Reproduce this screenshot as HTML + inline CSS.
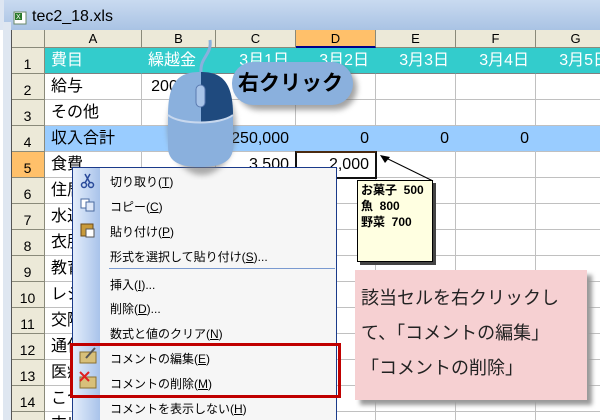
<!DOCTYPE html>
<html><head><meta charset="utf-8"><style>
*{margin:0;padding:0;box-sizing:border-box}
html,body{width:600px;height:420px;overflow:hidden}
body{position:relative;background:#fff;font-family:"Liberation Sans","Noto Sans CJK JP",sans-serif}
.abs{position:absolute}
.title{left:0;top:0;width:600px;height:30px;background:linear-gradient(#c9daf0,#a9c3e4);border-left:4px solid #dde6f2}
.frame{left:3px;top:22px;width:8px;height:398px;background:#dfe7f1}
.cell{position:absolute;border-right:1px solid #c0c0c0;border-bottom:1px solid #c0c0c0;font-size:16px;line-height:26px;white-space:nowrap;overflow:hidden}
.ch{position:absolute;top:30px;height:18px;background:#ece9d8;border-right:1px solid #8a8a7a;border-bottom:1px solid #8a8a7a;font-size:13px;text-align:center;line-height:18px}
.rh{position:absolute;left:11px;width:34px;background:#ece9d8;border-right:1px solid #8a8a7a;border-bottom:1px solid #8a8a7a;font-size:14px;text-align:center;padding-top:8px}
.mi{position:absolute;left:110px;font-size:12px;color:#000}
</style></head><body>
<div class="abs title"></div>
<div class="abs frame"></div>
<svg class="abs" style="left:13px;top:11px" width="14" height="14"><rect x="1" y="1" width="12" height="12" fill="#fff" stroke="#6a8a6a"/><rect x="2" y="2" width="7" height="7" fill="#2a7a2a"/><text x="3" y="8" font-size="7" fill="#fff">X</text></svg>
<div class="abs" style="left:32px;top:8px;font-size:16px">tec2_18.xls</div>
<div id="g"></div>
<script>
var cols=[45,142,216,296,376,456,536,616],names=["A","B","C","D","E","F","G"];
var h="";
h+='<div class="ch" style="left:11px;width:34px"></div>';
for(var i=0;i<7;i++){h+='<div class="ch" style="left:'+cols[i]+'px;width:'+(cols[i+1]-cols[i])+'px;'+(i==3?'background:#ffc06a;border-bottom:2px solid #00008b':'')+'">'+names[i]+'</div>';}
var data={1:["費目","繰越金","3月1日","3月2日","3月3日","3月4日","3月5日"],2:["給与","200,000","","","","",""],3:["その他","","","","","",""],4:["収入合計","","250,000","0","0","0",""],5:["食費","","3,500","2,000","","",""],6:["住居費"],7:["水道光熱費"],8:["衣服費"],9:["教育費"],10:["レジャー費"],11:["交際費"],12:["通信費"],13:["医療費"],14:["こづかい"],15:["支出合計"]};
for(var r=1;r<=15;r++){var y=48+(r-1)*26;
h+='<div class="rh" style="top:'+y+'px;height:26px;'+(r==5?'background:#ffc06a':'')+'">'+r+'</div>';
for(var c=0;c<7;c++){var t=(data[r]&&data[r][c])||"";var bg=r==1?'#33cccc':(r==4?'#99ccff':'#fff');var col=r==1?'#fff':'#000';var al=(c==0||(r==1&&c==1))?'left':'right';
var br=(r==1||r==4)?'border-right-color:'+bg+';':'';
h+='<div class="cell" style="left:'+cols[c]+'px;top:'+y+'px;width:'+(cols[c+1]-cols[c])+'px;height:26px;background:'+bg+';color:'+col+';text-align:'+al+';padding:0 6px;'+br+(r==1?'border-bottom-color:#808080;':'')+'">'+t+'</div>';}}
document.getElementById('g').innerHTML=h;
</script>
<div class="abs" style="left:11px;top:30px;width:1px;height:390px;background:#555"></div>
<div class="abs" style="left:295px;top:151px;width:82px;height:28px;border:2px solid #111;border-top-color:#4a2a10"></div>
<svg class="abs" style="left:0;top:0" width="600" height="420"><line x1="384" y1="157" x2="433" y2="181" stroke="#000" stroke-width="1"/><polygon points="380,155 390,157 385,163" fill="#000"/></svg>
<div class="abs" style="left:360px;top:183px;width:76px;height:82px;background:#444"></div>
<div class="abs" style="left:357px;top:180px;width:76px;height:82px;background:#ffffe1;border:1px solid #000;font-size:12px;font-weight:bold;line-height:16px;padding:1px 3px">お菓子 &nbsp;500<br>魚 &nbsp;800<br>野菜 &nbsp;700</div>
<div class="abs" style="left:360px;top:275px;width:232px;height:130px;background:#999;filter:blur(2px)"></div>
<div class="abs" style="left:355px;top:270px;width:232px;height:130px;background:#f6d0d2;font-size:18px;color:#222;line-height:35px;padding:10px 0 0 6px;font-family:'Noto Sans CJK JP',sans-serif">該当セルを右クリックし<br>て、「コメントの編集」<br>「コメントの削除」</div>
<div class="abs" style="left:72px;top:167px;width:265px;height:260px;background:#f6f6f6;border:1px solid #1a3a8a"></div>
<div class="abs" style="left:73px;top:168px;width:27px;height:260px;background:linear-gradient(90deg,#e3edfb,#a9c3ea)"></div>
<div class="abs" style="left:109px;top:268px;width:226px;height:1px;background:#7a9ad0"></div>
<div class="mi" style="top:173px">切り取り(<u>T</u>)</div>
<div class="mi" style="top:198px">コピー(<u>C</u>)</div>
<div class="mi" style="top:223px">貼り付け(<u>P</u>)</div>
<div class="mi" style="top:248px">形式を選択して貼り付け(<u>S</u>)...</div>
<div class="mi" style="top:276px">挿入(<u>I</u>)...</div>
<div class="mi" style="top:300px">削除(<u>D</u>)...</div>
<div class="mi" style="top:325px">数式と値のクリア(<u>N</u>)</div>
<div class="mi" style="top:350px">コメントの編集(<u>E</u>)</div>
<div class="mi" style="top:375px">コメントの削除(<u>M</u>)</div>
<div class="mi" style="top:400px">コメントを表示しない(<u>H</u>)</div>
<svg class="abs" style="left:78px;top:172px" width="20" height="240">
<g stroke="#2a4a9a" fill="none" stroke-width="1.5"><circle cx="6" cy="13" r="2.5"/><circle cx="13" cy="13" r="2.5"/><line x1="7" y1="11" x2="12" y2="2"/><line x1="12" y1="11" x2="7" y2="2"/></g>
<rect x="3" y="27" width="8" height="9" fill="#fff" stroke="#4a6aa0"/><rect x="8" y="30" width="8" height="9" fill="#dfe8f8" stroke="#4a6aa0"/>
<rect x="3" y="52" width="12" height="12" fill="#c89a3a" stroke="#6a4a1a"/><rect x="8" y="57" width="8" height="8" fill="#fff" stroke="#555"/>
<rect x="2" y="180" width="16" height="11" fill="#d8c07a" stroke="#8a7030"/><line x1="8" y1="186" x2="17" y2="176" stroke="#555" stroke-width="2"/>
<rect x="2" y="205" width="16" height="11" fill="#d8c07a" stroke="#8a7030"/><path d="M2 200l9 9M11 200l-9 9" stroke="#e02020" stroke-width="2"/>
</svg>
<div class="abs" style="left:70px;top:343px;width:271px;height:55px;border:3px solid #c00000"></div>
<svg class="abs" style="left:160px;top:35px" width="90" height="145">
<defs><filter id="b"><feGaussianBlur stdDeviation="3"/></filter></defs>
<ellipse cx="42" cy="92" rx="34" ry="48" fill="#777" filter="url(#b)" opacity=".6"/>
<path d="M50 5 C52 20 40 22 41 37" stroke="#8ab0dd" stroke-width="3" fill="none"/>
<path d="M8 80 C8 45 20 37 40 37 C60 37 73 45 73 80 L73 112 C73 128 58 132 40 132 C22 132 8 128 8 112Z" fill="#8ab0dd"/>
<path d="M41 37 C60 37 73 45 73 80 C62 85 52 87 41 87Z" fill="#1f4a7e"/>
<path d="M8 80 C20 90 60 90 73 80" stroke="#c8d8ee" stroke-width="2" fill="none"/>
<rect x="36" y="50" width="9" height="22" rx="4.5" fill="#a8c4e8" stroke="#5a7ab0"/>
</svg>
<div class="abs" style="left:237px;top:66px;width:120px;height:44px;border-radius:22px;background:#666;filter:blur(3px);opacity:.6"></div>
<div class="abs" style="left:232px;top:62px;width:121px;height:43px;border-radius:21px;background:#8ab0dd;font-size:21px;font-weight:bold;line-height:43px;padding-left:6px;color:#000">右クリック</div>
</body></html>
